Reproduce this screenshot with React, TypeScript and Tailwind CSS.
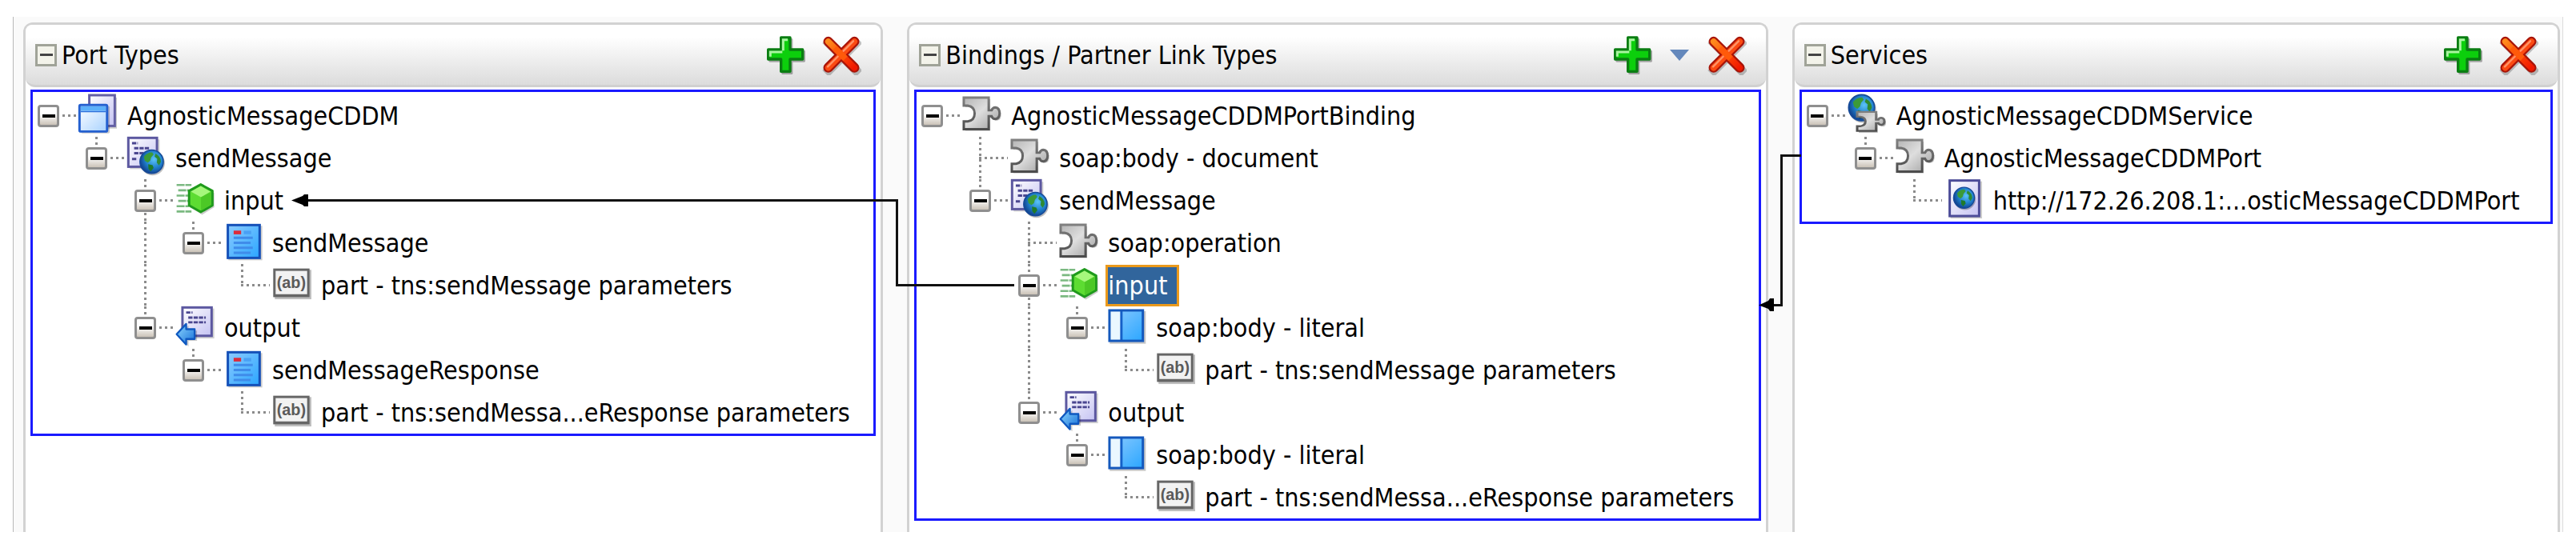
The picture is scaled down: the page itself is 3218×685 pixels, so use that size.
import type { ReactNode } from "react"
import clsx from "clsx"

type IconName = "portType" | "operation" | "input" | "output" | "message" | "part" | "binding" | "soapBody" | "service" | "endpoint"

// one character per tree column, the last one is the row's own column:
// "." root, " " empty, "|" passes through, "+" has a next sibling, "L" last child
type Row = {
  guides: string
  icon: IconName
  label: string
  leaf?: boolean
  selected?: boolean
}

const portTypes: Row[] = [
  { guides: ".", icon: "portType", label: "AgnosticMessageCDDM" },
  { guides: " L", icon: "operation", label: "sendMessage" },
  { guides: "  +", icon: "input", label: "input" },
  { guides: "  |L", icon: "message", label: "sendMessage" },
  { guides: "  | L", icon: "part", label: "part - tns:sendMessage parameters", leaf: true },
  { guides: "  L", icon: "output", label: "output" },
  { guides: "   L", icon: "message", label: "sendMessageResponse" },
  { guides: "    L", icon: "part", label: "part - tns:sendMessa...eResponse parameters", leaf: true },
]

const bindings: Row[] = [
  { guides: ".", icon: "binding", label: "AgnosticMessageCDDMPortBinding" },
  { guides: " +", icon: "binding", label: "soap:body - document", leaf: true },
  { guides: " L", icon: "operation", label: "sendMessage" },
  { guides: "  +", icon: "binding", label: "soap:operation", leaf: true },
  { guides: "  +", icon: "input", label: "input", selected: true },
  { guides: "  |L", icon: "soapBody", label: "soap:body - literal" },
  { guides: "  | L", icon: "part", label: "part - tns:sendMessage parameters", leaf: true },
  { guides: "  L", icon: "output", label: "output" },
  { guides: "   L", icon: "soapBody", label: "soap:body - literal" },
  { guides: "    L", icon: "part", label: "part - tns:sendMessa...eResponse parameters", leaf: true },
]

const services: Row[] = [
  { guides: ".", icon: "service", label: "AgnosticMessageCDDMService" },
  { guides: " L", icon: "binding", label: "AgnosticMessageCDDMPort" },
  { guides: "  L", icon: "endpoint", label: "http://172.26.208.1:...osticMessageCDDMPort", leaf: true },
]

function Gradients() {
  return (
    <svg className="absolute size-0" aria-hidden="true">
      <defs>
        <linearGradient id="gray" x1="0" y1="0" x2="1" y2="1">
          <stop offset="0" stopColor="#b4b4b4" />
          <stop offset="0.45" stopColor="#dedede" />
          <stop offset="1" stopColor="#9c9c9c" />
        </linearGradient>
        <linearGradient id="edge" x1="0" y1="0" x2="0" y2="1">
          <stop offset="0" stopColor="#808080" />
          <stop offset="1" stopColor="#4c4c4c" />
        </linearGradient>
        <linearGradient id="lilac" x1="0" y1="0" x2="1" y2="1">
          <stop offset="0" stopColor="#ffffff" />
          <stop offset="1" stopColor="#c4c2f2" />
        </linearGradient>
        <linearGradient id="sky" x1="0" y1="0" x2="1" y2="1">
          <stop offset="0" stopColor="#8ccbff" />
          <stop offset="1" stopColor="#2ba6ff" />
        </linearGradient>
        <linearGradient id="pale" x1="0" y1="0" x2="1" y2="1">
          <stop offset="0" stopColor="#ffffff" />
          <stop offset="1" stopColor="#a8d2ff" />
        </linearGradient>
        <linearGradient id="arrow" x1="0" y1="0" x2="1" y2="1">
          <stop offset="0" stopColor="#8fd8ff" />
          <stop offset="1" stopColor="#1670d8" />
        </linearGradient>
        <linearGradient id="red" x1="0" y1="0" x2="1" y2="1">
          <stop offset="0" stopColor="#ff8a1c" />
          <stop offset="0.5" stopColor="#ff4a08" />
          <stop offset="1" stopColor="#f01800" />
        </linearGradient>
        <radialGradient id="sea" cx="0.6" cy="0.4" r="0.65">
          <stop offset="0" stopColor="#5cc4f8" />
          <stop offset="0.55" stopColor="#2080cc" />
          <stop offset="1" stopColor="#103c88" />
        </radialGradient>
      </defs>
    </svg>
  )
}

function Globe({ x, y, r }: { x: number; y: number; r: number }) {
  return (
    <g transform={`translate(${x} ${y}) scale(${r / 5})`}>
      <circle cx="0.4" cy="0.6" r="5" fill="#000" opacity="0.25" />
      <circle r="4.8" fill="url(#sea)" stroke="#164a98" strokeWidth="0.5" />
      <path d="M-3.2 -2Q-1.8 -3.9 0.2 -3.8L0.8 -3L-0.2 -1.8L-0.6 -0.4L-1.6 0.4L-2.8 -0.4Z" fill="#3c9a38" />
      <path d="M-1.4 1L0.4 1.4L0.8 2.6L-0.4 4L-1.3 2.9Z" fill="#1f7a2a" />
      <path d="M1.6 -3.3Q3.7 -2.2 3.8 0L3 1.5L2.1 0.4L2.3 -1.2L1.2 -2.1Z" fill="#2f8a34" />
    </g>
  )
}

const puzzle = "M1.5 1.2H10.9V6H12Q12.4 4.9 13.4 4.9Q15 5.1 15 7.1Q15 9.1 13.4 9.3Q12.4 9.3 12 8.2H10.9V13.1H1.5V10.2H3Q5.6 9.8 5.6 7.2Q5.6 4.6 3 4.2H1.5Z"

const icons: Record<IconName, ReactNode> = {
  portType: (
    <>
      <path d="M6 1.2H15.4V12.9H6Z" fill="#000" opacity="0.2" />
      <rect x="5" y="0.3" width="9.6" height="11.6" fill="url(#lilac)" stroke="#6460a4" strokeWidth="0.9" />
      <rect x="1.9" y="4.4" width="10.8" height="10.3" rx="0.5" fill="#000" opacity="0.2" />
      <rect x="1.3" y="4" width="10.4" height="10" rx="0.5" fill="url(#pale)" stroke="#2460d0" strokeWidth="0.9" />
      <rect x="1.8" y="4.5" width="9.4" height="1.7" fill="#5cb0fa" />
      <path d="M1.8 6.5H11.2" stroke="#2a70dc" strokeWidth="0.5" />
    </>
  ),
  operation: (
    <>
      <rect x="2.2" y="1" width="11.2" height="11.2" fill="#000" opacity="0.18" />
      <rect x="1.6" y="0.4" width="10.8" height="10.9" fill="url(#lilac)" stroke="#5c58a0" strokeWidth="0.9" />
      <path d="M3 2.4H5.2M3.8 4.3H9.8M3.8 6.2H8M3 8.4H5" stroke="#4a4690" strokeWidth="0.9" strokeDasharray="1.6 0.4" />
      <Globe x={10.4} y={9.4} r={4.6} />
    </>
  ),
  input: (
    <>
      <path d="M1.4 2.2H7M2 4.2H6M1.4 6.2H6M2 8.2H6M1.4 10.2H6M1.4 12.2H7" stroke="#4fa257" strokeWidth="0.8" strokeDasharray="3 0.3 2.4" opacity="0.75" />
      <path d="M11 2.8L15.6 5.2V10.6L11 13.4L6.6 10.6V5.2Z" fill="#000" opacity="0.2" />
      <path d="M10.5 2L14.9 4.4V9.9L10.5 12.4L6.1 9.9V4.4Z" fill="#5ddc32" stroke="#1f9a1c" strokeWidth="0.9" strokeLinejoin="round" />
      <path d="M10.5 2.6L14.2 4.7L10.6 6.8L6.8 4.7Z" fill="#a6f77c" />
      <path d="M10.6 6.8L14.4 4.8V9.6L10.6 11.8Z" fill="#4cc826" />
    </>
  ),
  output: (
    <>
      <rect x="4" y="0.8" width="11.6" height="11.3" fill="#000" opacity="0.18" />
      <rect x="3.6" y="0.4" width="11" height="10.7" fill="url(#lilac)" stroke="#5c58a0" strokeWidth="0.9" />
      <path d="M5 2.3H7.4M5.8 4.2H12.4M5.8 6H12.4" stroke="#4a4690" strokeWidth="0.9" strokeDasharray="1.6 0.4" />
      <path d="M1.9 11.3L5.9 7.2V9.1H9.1V13H5.9V15.2Z" fill="#000" opacity="0.2" />
      <path d="M1.4 10.5L5 6.6V8.6H8.2V12.3H5V14.4Z" fill="url(#arrow)" stroke="#0f58c0" strokeWidth="0.7" strokeLinejoin="round" />
    </>
  ),
  message: (
    <>
      <rect x="2.8" y="1.6" width="12.8" height="13" fill="#000" opacity="0.2" />
      <rect x="2.6" y="1.3" width="12" height="12.4" fill="url(#sky)" stroke="#1450b8" strokeWidth="0.9" />
      <rect x="4.8" y="3.4" width="2.8" height="1.4" fill="#dc2c3c" />
      <path d="M8.6 4.1H11.4" stroke="#4aa0f4" strokeWidth="1.3" />
      <path d="M4.8 6.1H12M4.8 8H11.2M4.8 9.9H12M4.8 11.8H11.2" stroke="#3f8cea" strokeWidth="0.9" />
    </>
  ),
  part: (
    <>
      <rect x="1.9" y="2.2" width="13.8" height="11.1" fill="#000" opacity="0.25" />
      <rect x="1.3" y="1.7" width="13.7" height="10.8" fill="#666" />
      <rect x="2.2" y="2.6" width="11.9" height="8.8" fill="#f2f2f2" />
      <text x="8.1" y="9" textAnchor="middle" fontFamily="Liberation Sans, sans-serif" fontSize="6" fontWeight="700" fill="#5a5a5a">(ab)</text>
    </>
  ),
  binding: (
    <>
      <path d={puzzle} transform="translate(0.6 0.6)" fill="#000" opacity="0.25" />
      <path d={puzzle} fill="url(#gray)" stroke="url(#edge)" strokeWidth="0.9" />
    </>
  ),
  soapBody: (
    <>
      <rect x="1.9" y="1.8" width="13.6" height="12.3" fill="#000" opacity="0.22" />
      <rect x="1.8" y="1.5" width="12.6" height="11.5" fill="url(#sky)" />
      <rect x="1.8" y="1.5" width="4.2" height="11.5" fill="#eaf7ff" />
      <path d="M6.3 1.5V13" stroke="#1460c8" strokeWidth="0.9" />
      <rect x="1.8" y="1.5" width="12.6" height="11.5" fill="none" stroke="#1458bc" strokeWidth="0.9" />
    </>
  ),
  service: (
    <>
      <Globe x={6.2} y={5} r={5.1} />
      <path d={puzzle} transform="translate(4 6.6) scale(0.76 0.6)" fill="#000" opacity="0.25" />
      <path d={puzzle} transform="translate(3.4 5.9) scale(0.76 0.6)" fill="url(#gray)" stroke="url(#edge)" strokeWidth="1.2" />
    </>
  ),
  endpoint: (
    <>
      <rect x="3.2" y="0.8" width="11.9" height="14" fill="#000" opacity="0.2" />
      <rect x="2.9" y="0.5" width="11.1" height="13.4" fill="url(#lilac)" stroke="#4c4c98" strokeWidth="0.9" />
      <Globe x={8.3} y={7} r={4.1} />
    </>
  ),
}

function Toggle({ name }: { name: string }) {
  return (
    <button
      type="button"
      aria-expanded="true"
      aria-label={`Collapse ${name}`}
      className="relative flex h-7 w-[27px] shrink-0 items-center justify-center rounded-sm border-[3px] border-[#8f8f8f] bg-linear-to-b from-white from-40% to-[#cbc3b8]"
    >
      <span className="h-1 w-4 bg-black" />
    </button>
  )
}

function TreeRow({ row }: { row: Row }) {
  const own = row.guides[row.guides.length - 1]

  return (
    <li className="flex h-[53px] items-center">
      {row.guides.slice(0, -1).split("").map((guide, i) => (
        <span key={i} className="relative h-full shrink-0 odd:w-[60px] even:w-[61px]">
          {guide === "|" && (
            <span className="absolute inset-y-0 left-3 w-[3px] bg-[repeating-linear-gradient(to_bottom,#8c8c8c_0_3px,transparent_3px_7px)]" />
          )}
        </span>
      ))}
      <span className="relative flex h-full w-12 shrink-0 items-center">
        {own !== "." && (
          <span
            className={clsx(
              "absolute top-0 left-3 w-[3px] bg-[repeating-linear-gradient(to_bottom,#8c8c8c_0_3px,transparent_3px_7px)]",
              own === "+" ? "h-full" : "h-7"
            )}
          />
        )}
        {row.leaf ? <span className="w-3 shrink-0" /> : <Toggle name={row.label} />}
        <span className={clsx("h-[3px] flex-1 bg-[repeating-linear-gradient(to_right,#8c8c8c_0_3px,transparent_3px_7px)]", !row.leaf && "ml-1")} />
      </span>
      <svg viewBox="0 0 16 16" className="size-[53px] shrink-0 overflow-visible" aria-hidden="true">
        {icons[row.icon]}
      </svg>
      <span
        className={clsx(
          "ml-2 flex h-[52px] items-center border-[3px] pr-3 whitespace-nowrap",
          row.selected ? "border-[#eb9a1c] bg-[#31659c] text-white" : "border-transparent"
        )}
      >
        {row.label}
      </span>
    </li>
  )
}

function AddIcon() {
  const plus = "M5.9 0.9H9.3V5.4H14V9H9.3V13.6H5.9V9H1.1V5.4H5.9Z"
  return (
    <svg viewBox="0 0 15 15" className="size-[50px]" aria-hidden="true">
      <path d={plus} transform="translate(0.6 0.7)" fill="#000" opacity="0.3" stroke="#000" strokeWidth="0.8" strokeLinejoin="round" />
      <path d={plus} fill="#0ccf0c" stroke="#0a7d12" strokeWidth="1" strokeLinejoin="round" />
      <path d="M6.7 5.8V1.7H8.4M1.9 8V6.3H6.4" fill="none" stroke="#a8f5a0" strokeWidth="0.9" />
    </svg>
  )
}

function DeleteIcon() {
  return (
    <svg viewBox="0 0 15 15" className="size-[50px]" aria-hidden="true">
      <path d="M2.8 3L13 13.2M13 3L2.8 13.2" stroke="#000" strokeWidth="3.4" strokeLinecap="square" opacity="0.22" />
      <path d="M2.6 2.4L12.4 12.2M12.4 2.4L2.6 12.2" stroke="#a81408" strokeWidth="3.7" strokeLinecap="round" />
      <path d="M2.6 2.4L12.4 12.2" stroke="url(#red)" strokeWidth="2.3" strokeLinecap="round" />
      <path d="M12.4 2.4L2.6 12.2" stroke="#fb4a12" strokeWidth="2.3" strokeLinecap="round" />
      <path d="M12 2.2L8.3 5.9M6.4 7.8L2.4 11.8" stroke="#ff9468" strokeWidth="0.7" strokeLinecap="round" />
      <path d="M5 4.8L9 8.8" stroke="#ff5a0a" strokeWidth="2.3" />
    </svg>
  )
}

function Panel({ title, rows, menu }: { title: string; rows: Row[]; menu?: boolean }) {
  return (
    <section className="flex min-w-0 flex-col rounded-t-xl border-x-[3px] border-t-[3px] border-[#d2d2d2] bg-white">
      <header className="flex h-[78px] items-center rounded-t-lg rounded-b-xl border-b-[3px] border-[#d0d0d0] bg-linear-to-b from-white from-20% to-[#dcdcdc] pr-6 pl-3">
        <button
          type="button"
          aria-expanded="true"
          aria-label={`Collapse ${title}`}
          className="flex h-7 w-[27px] shrink-0 items-center justify-center border-[3px] border-[#a0a398] bg-[#f3f3ea]"
        >
          <span className="h-[3px] w-4 bg-[#444]" />
        </button>
        <h2 className="ml-1.5 flex-1 whitespace-nowrap">{title}</h2>
        <div className="flex items-center gap-5">
          <button type="button" aria-label={`Add to ${title}`}>
            <AddIcon />
          </button>
          {menu && (
            <button type="button" aria-label="More add options" className="flex w-7 justify-center">
              <svg viewBox="0 0 24 14" className="h-3.5 w-6" aria-hidden="true">
                <path d="M0 0H24L12 14Z" fill="#6488bc" />
              </svg>
            </button>
          )}
          <button type="button" aria-label={`Delete from ${title}`}>
            <DeleteIcon />
          </button>
        </div>
      </header>
      <div className="px-1.5 pt-[3px]">
        <ul className="border-[3px] border-[#1a1aff] pt-[3px] pl-1.5">
          {rows.map((row, i) => (
            <TreeRow key={i} row={row} />
          ))}
        </ul>
      </div>
    </section>
  )
}

// links between the columns, drawn over the panels
function Connectors() {
  return (
    <svg className="pointer-events-none absolute inset-0 size-full" aria-hidden="true">
      <g fill="none" stroke="#111" strokeWidth="3">
        <path d="M380 250.5H1120.5V356.5H1267" />
        <path d="M2250 194.5H2225.5V381.5H2210" />
      </g>
      <path d="M364 250.5L378 245L380 243H385V258H380L378 256Z" />
      <path d="M2197 381.5L2209 376L2211 373H2216V389H2211L2209 386Z" />
    </svg>
  )
}

export default function App() {
  return (
    <div className="relative flex min-h-screen bg-white pt-[21px] pr-4 pb-5 pl-4 font-['DejaVu_Sans_Condensed','DejaVu_Sans',sans-serif] text-[32px] leading-10 text-black">
      <Gradients />
      <main className="grid flex-1 grid-cols-[1074fr_1075fr_959fr] gap-[30px] border-r border-l border-r-[#dcdcdc] border-l-[#b8b8b8] bg-[#fafafa] pt-[7px] pr-[3px] pl-3">
        <Panel title="Port Types" rows={portTypes} />
        <Panel title="Bindings / Partner Link Types" rows={bindings} menu />
        <Panel title="Services" rows={services} />
      </main>
      <Connectors />
    </div>
  )
}
